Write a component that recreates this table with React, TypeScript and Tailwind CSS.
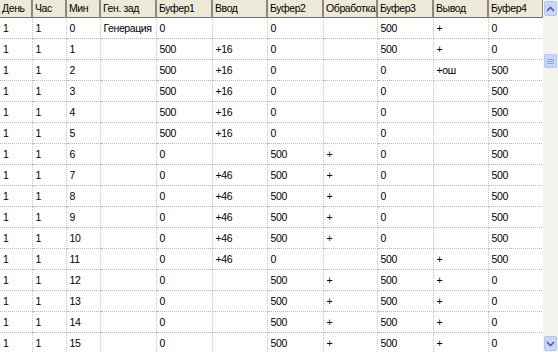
const columns = [
  { title: "День", width: 32 },
  { title: "Час", width: 34 },
  { title: "Мин", width: 34 },
  { title: "Ген. зад", width: 56 },
  { title: "Буфер1", width: 56 },
  { title: "Ввод", width: 55 },
  { title: "Буфер2", width: 56 },
  { title: "Обработка", width: 54 },
  { title: "Буфер3", width: 56 },
  { title: "Вывод", width: 55 },
  { title: "Буфер4", width: 55 },
];

const rows: string[][] = [
  ["1", "1", "0", "Генерация", "0", "", "0", "", "500", "+", "0"],
  ["1", "1", "1", "", "500", "+16", "0", "", "500", "+", "0"],
  ["1", "1", "2", "", "500", "+16", "0", "", "0", "+ош", "500"],
  ["1", "1", "3", "", "500", "+16", "0", "", "0", "", "500"],
  ["1", "1", "4", "", "500", "+16", "0", "", "0", "", "500"],
  ["1", "1", "5", "", "500", "+16", "0", "", "0", "", "500"],
  ["1", "1", "6", "", "0", "", "500", "+", "0", "", "500"],
  ["1", "1", "7", "", "0", "+46", "500", "+", "0", "", "500"],
  ["1", "1", "8", "", "0", "+46", "500", "+", "0", "", "500"],
  ["1", "1", "9", "", "0", "+46", "500", "+", "0", "", "500"],
  ["1", "1", "10", "", "0", "+46", "500", "+", "0", "", "500"],
  ["1", "1", "11", "", "0", "+46", "0", "", "500", "+", "500"],
  ["1", "1", "12", "", "0", "", "500", "+", "500", "+", "0"],
  ["1", "1", "13", "", "0", "", "500", "+", "500", "+", "0"],
  ["1", "1", "14", "", "0", "", "500", "+", "500", "+", "0"],
  ["1", "1", "15", "", "0", "", "500", "+", "500", "+", "0"],
];

function Chevron({ up }: { up?: boolean }) {
  return (
    <svg width="9" height="6" viewBox="0 0 9 6">
      <path
        d={up ? "M1 5 L4.5 1.5 L8 5" : "M1 1 L4.5 4.5 L8 1"}
        fill="none"
        stroke="#4d6185"
        strokeWidth="1.6"
      />
    </svg>
  );
}

function ScrollBar() {
  return (
    <div className="w-[15px] h-full flex flex-col bg-[#f4f3ee]">
      <div className="h-[15px] mx-[1px] mt-[1px] rounded-[2px] bg-[#c8d6fb] border border-[#b4c6f0] flex items-center justify-center">
        <Chevron up />
      </div>
      <div className="h-[38px]" />
      <div className="h-[14px] mx-[1px] rounded-[2px] bg-[#c8d6fb] border border-[#b4c6f0] flex flex-col items-center justify-center gap-[1px]">
        <div className="w-[7px] h-[1px] bg-[#8ba2e0]" />
        <div className="w-[7px] h-[1px] bg-[#8ba2e0]" />
        <div className="w-[7px] h-[1px] bg-[#8ba2e0]" />
      </div>
      <div className="flex-1" />
      <div className="h-[15px] mx-[1px] mb-[1px] rounded-[2px] bg-[#c8d6fb] border border-[#b4c6f0] flex items-center justify-center">
        <Chevron />
      </div>
    </div>
  );
}

export default function App() {
  return (
    <div className="w-[558px] h-[352px] overflow-hidden flex bg-white font-['Liberation_Sans',Arial,sans-serif] text-[10.5px] tracking-[-0.4px] text-black">
      <div className="w-[543px] h-full overflow-hidden">
        <table className="table-fixed border-collapse w-[543px]">
          <colgroup>
            {columns.map((c) => (
              <col key={c.title} style={{ width: c.width }} />
            ))}
          </colgroup>
          <thead>
            <tr className="h-[17px] bg-[#ece9d8]">
              {columns.map((c) => (
                <th
                  key={c.title}
                  className="p-0 pl-[2px] text-left font-normal whitespace-nowrap overflow-hidden border-r-2 border-r-[#8a887c] border-b border-b-[#716f64] leading-[16px]"
                >
                  {c.title}
                </th>
              ))}
            </tr>
          </thead>
          <tbody>
            {rows.map((r, i) => (
              <tr key={i} className="h-[21px]">
                {r.map((v, j) => (
                  <td
                    key={j}
                    className="p-0 pl-[3px] whitespace-nowrap overflow-hidden border-r border-r-[#c6c6c6] border-b border-dotted border-b-[#b8b8b8] leading-[20px]"
                  >
                    {v}
                  </td>
                ))}
              </tr>
            ))}
          </tbody>
        </table>
      </div>
      <ScrollBar />
    </div>
  );
}
